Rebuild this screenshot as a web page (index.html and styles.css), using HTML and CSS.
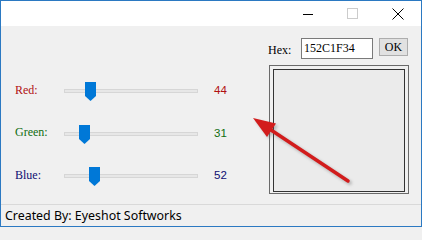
FILE: index.html
```html
<!DOCTYPE html>
<html>
<head>
<meta charset="utf-8">
<link rel="stylesheet" href="styles.css">
</head>
<body>
<div class="window">
  <div class="titlebar">
    <div class="tb-btn"><svg width="10" height="10" viewBox="0 0 10 10"><line x1="0" y1="5.5" x2="10" y2="5.5" stroke="#000" stroke-width="1"/></svg></div>
    <div class="tb-btn"><svg width="11" height="11" viewBox="0 0 11 11"><rect x="0.5" y="0.5" width="10" height="10" fill="none" stroke="#cccccc" stroke-width="1"/></svg></div>
    <div class="tb-btn tb-close"><svg width="12" height="12" viewBox="0 0 12 12"><path d="M0.5 0.5 L11.5 11.5 M11.5 0.5 L0.5 11.5" stroke="#000" stroke-width="1"/></svg></div>
  </div>
  <div class="main">
    <div class="sliders">
      <div class="row">
        <span class="label red">Red:</span>
        <div class="slider">
          <div class="track"></div>
          <svg class="thumb" style="left:21px" width="11" height="19" viewBox="0 0 11 19"><polygon points="0,0 11,0 11,14 5.5,19 0,14" fill="#0078d7"/></svg>
        </div>
        <span class="value red">44</span>
      </div>
      <div class="row">
        <span class="label green">Green:</span>
        <div class="slider">
          <div class="track"></div>
          <svg class="thumb" style="left:15px" width="11" height="19" viewBox="0 0 11 19"><polygon points="0,0 11,0 11,14 5.5,19 0,14" fill="#0078d7"/></svg>
        </div>
        <span class="value green">31</span>
      </div>
      <div class="row">
        <span class="label blue">Blue:</span>
        <div class="slider">
          <div class="track"></div>
          <svg class="thumb" style="left:25px" width="11" height="19" viewBox="0 0 11 19"><polygon points="0,0 11,0 11,14 5.5,19 0,14" fill="#0078d7"/></svg>
        </div>
        <span class="value blue">52</span>
      </div>
    </div>
    <div class="side">
      <div class="hex-row">
        <span class="hex-label">Hex:</span>
        <div class="hex-box">152C1F34</div>
        <div class="ok-btn">OK</div>
      </div>
      <div class="preview-outer">
        <div class="preview-inner"></div>
      </div>
    </div>
  </div>
  <div class="status">Created By: Eyeshot Softworks</div>
  <svg class="arrow" width="422" height="227" viewBox="0 0 422 227">
    <defs>
      <filter id="sh" x="-20%" y="-20%" width="140%" height="140%">
        <feGaussianBlur stdDeviation="1.5"/>
      </filter>
    </defs>
    <g filter="url(#sh)" opacity="0.35" transform="translate(2,2)">
      <line x1="348" y1="181" x2="268" y2="128" stroke="#555" stroke-width="4" stroke-linecap="round"/>
      <polygon points="253,118 276,123.5 267,137" fill="#555"/>
    </g>
    <line x1="348" y1="181" x2="268" y2="128" stroke="#d21c1c" stroke-width="3.5" stroke-linecap="round"/>
    <polygon points="253,118 276,123.5 267,137" fill="#d21c1c"/>
  </svg>
</div>
</body>
</html>
```

FILE: styles.css
```css
html, body {
  margin: 0;
  padding: 0;
  background: #f0f0f0;
}

.window {
  position: relative;
  width: 420px;
  height: 225px;
  border: 1px solid #2b79c2;
  background: #f0f0f0;
  display: flex;
  flex-direction: column;
  overflow: hidden;
}

.titlebar {
  height: 25px;
  background: #ffffff;
  display: flex;
  justify-content: flex-end;
  padding-right: 1px;
}

.tb-btn {
  width: 45px;
  height: 25px;
  display: flex;
  align-items: center;
  justify-content: center;
}

.tb-btn svg {
  display: block;
}

.main {
  height: 178px;
  display: flex;
}

.sliders {
  width: 253px;
  padding-top: 43px;
  display: flex;
  flex-direction: column;
}

.row {
  height: 42.5px;
  display: flex;
  align-items: center;
  padding-left: 14px;
}

.label {
  width: 49px;
  font-family: "Liberation Serif", serif;
  font-size: 12px;
}

.red { color: #b01010; }
.green { color: #106e10; }
.blue { color: #0e0e70; }

.slider {
  position: relative;
  width: 134px;
  height: 20px;
  margin-top: 4px;
}

.track {
  margin-top: 7px;
  height: 2px;
  background: #e7e7e7;
  border: 1px solid #d6d6d6;
}

.thumb {
  position: absolute;
  top: 0;
  display: block;
}

.value {
  margin-left: 16px;
  font-family: "Liberation Sans", sans-serif;
  font-size: 11.5px;
}

.side {
  flex: 1;
  padding-top: 12px;
  padding-left: 14px;
  display: flex;
  flex-direction: column;
}

.hex-row {
  display: flex;
  align-items: flex-start;
  height: 21px;
}

.hex-label {
  width: 33px;
  font-family: "Liberation Serif", serif;
  font-size: 12px;
  line-height: 21px;
  padding-top: 2px;
  color: #000;
}

.hex-box {
  width: 68px;
  height: 19px;
  border: 1px solid #7a7a7a;
  background: #ffffff;
  padding-left: 2px;
  font-family: "Liberation Serif", serif;
  font-size: 12px;
  line-height: 19px;
  color: #000;
}

.ok-btn {
  margin-left: 6px;
  width: 27px;
  height: 16px;
  border: 1px solid #adadad;
  background: #e1e1e1;
  font-family: "Liberation Serif", serif;
  font-size: 12px;
  line-height: 16px;
  text-align: center;
  color: #000;
}

.preview-outer {
  margin-top: 6px;
  margin-left: 1px;
  width: 133px;
  height: 123px;
  border: 1px solid #6a6a6a;
  padding: 3px 2px 1px 3px;
}

.preview-inner {
  width: 130px;
  height: 121px;
  border: 1px solid #333333;
  background: #ebebeb;
}

.status {
  border-top: 1px solid #d9d9d9;
  height: 21px;
  padding-left: 4px;
  font-family: "Noto Sans", sans-serif;
  font-size: 12.4px;
  line-height: 21px;
  color: #000;
}

.arrow {
  position: absolute;
  left: -1px;
  top: -1px;
  pointer-events: none;
}
```
